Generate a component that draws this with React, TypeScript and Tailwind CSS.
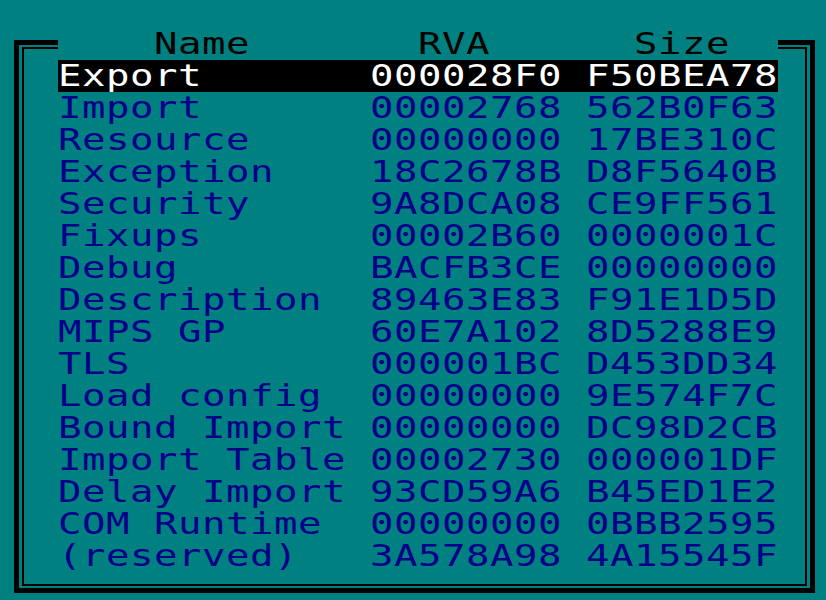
const rows: [string, string, string][] = [
  ['Export', '000028F0', 'F50BEA78'],
  ['Import', '00002768', '562B0F63'],
  ['Resource', '00000000', '17BE310C'],
  ['Exception', '18C2678B', 'D8F5640B'],
  ['Security', '9A8DCA08', 'CE9FF561'],
  ['Fixups', '00002B60', '0000001C'],
  ['Debug', 'BACFB3CE', '00000000'],
  ['Description', '89463E83', 'F91E1D5D'],
  ['MIPS GP', '60E7A102', '8D5288E9'],
  ['TLS', '000001BC', 'D453DD34'],
  ['Load config', '00000000', '9E574F7C'],
  ['Bound Import', '00000000', 'DC98D2CB'],
  ['Import Table', '00002730', '000001DF'],
  ['Delay Import', '93CD59A6', 'B45ED1E2'],
  ['COM Runtime', '00000000', '0BBB2595'],
  ['(reserved)', '3A578A98', '4A15545F'],
];

// text-mode cell: 24px wide, 32px tall
const cellText =
  "block origin-left scale-x-[1.3] whitespace-pre text-[30px] leading-[32px] tracking-[0.4px] font-['DejaVu_Sans_Mono',monospace]";

function Line({ text, selected }: { text: string; selected?: boolean }) {
  return (
    <div className={selected ? 'h-[32px] w-[720px] bg-black text-white' : 'h-[32px] w-[720px] text-[#000088]'}>
      <span className={cellText}>{text}</span>
    </div>
  );
}

export default function App() {
  return (
    <div className="h-[600px] w-[826px] overflow-hidden bg-[#008080] pt-[40px] pl-[14px]">
      <div className="h-[553px] w-[801px] border-[5px] border-black px-[3px] py-[2px]">
        <div className="h-full w-full border-2 border-black pl-[34px]">
          <div className="-mt-[21px] w-[720px]">
            <div className="h-[32px] w-[720px] bg-[#008080] text-black">
              <span className={cellText}>{'    Name       RVA      Size'}</span>
            </div>
            {rows.map(([name, rva, size], i) => (
              <Line key={name} text={name.padEnd(13) + rva + ' ' + size} selected={i === 0} />
            ))}
          </div>
        </div>
      </div>
    </div>
  );
}
